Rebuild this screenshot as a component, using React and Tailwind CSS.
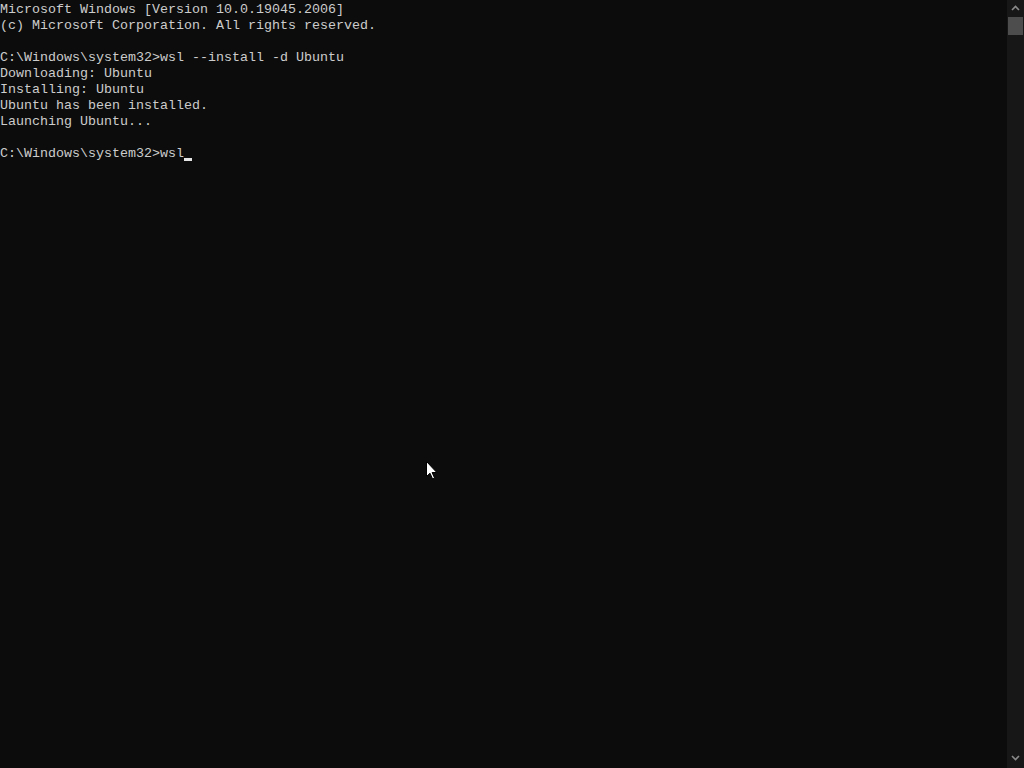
import React from 'react';

const lines = [
  'Microsoft Windows [Version 10.0.19045.2006]',
  '(c) Microsoft Corporation. All rights reserved.',
  '',
  'C:\\Windows\\system32>wsl --install -d Ubuntu',
  'Downloading: Ubuntu',
  'Installing: Ubuntu',
  'Ubuntu has been installed.',
  'Launching Ubuntu...',
  '',
];

function Pointer() {
  return (
    <svg width="12" height="19" viewBox="0 0 12 19" className="absolute left-[426px] top-[461px]">
      <path d="M0.5 0.5 L0.5 15.5 L4 12.2 L6.6 18 L8.6 17.1 L6.1 11.5 L10.8 11.5 Z" fill="#ffffff" stroke="#000000" strokeWidth="1" />
    </svg>
  );
}

export default function App() {
  return (
    <div className="relative flex h-[768px] w-[1024px] overflow-hidden bg-[#0c0c0c]">
      <div className="flex-1 whitespace-pre pt-[2px] text-[13.333px] leading-4 text-[#cccccc] [font-family:'Liberation_Mono',monospace]">
        {lines.map((l, i) => (
          <div key={i} className="h-4">{l}</div>
        ))}
        <div className="flex h-4 items-end">
          <span>C:\Windows\system32&gt;wsl</span>
          <span className="mb-[1px] inline-block h-[3px] w-2 bg-[#e5e5e5]" />
        </div>
      </div>
      <div className="flex w-[17px] flex-col items-center bg-[#171717]">
        <svg width="9" height="6" viewBox="0 0 9 6" className="mt-[5px]">
          <path d="M1 5 L4.5 1.5 L8 5" fill="none" stroke="#8a8a8a" strokeWidth="1.6" />
        </svg>
        <div className="mt-[6px] h-[18px] w-[15px] bg-[#4d4d4d]" />
        <div className="flex-1" />
        <svg width="9" height="6" viewBox="0 0 9 6" className="mb-[7px]">
          <path d="M1 1 L4.5 4.5 L8 1" fill="none" stroke="#8a8a8a" strokeWidth="1.6" />
        </svg>
      </div>
      <Pointer />
    </div>
  );
}
